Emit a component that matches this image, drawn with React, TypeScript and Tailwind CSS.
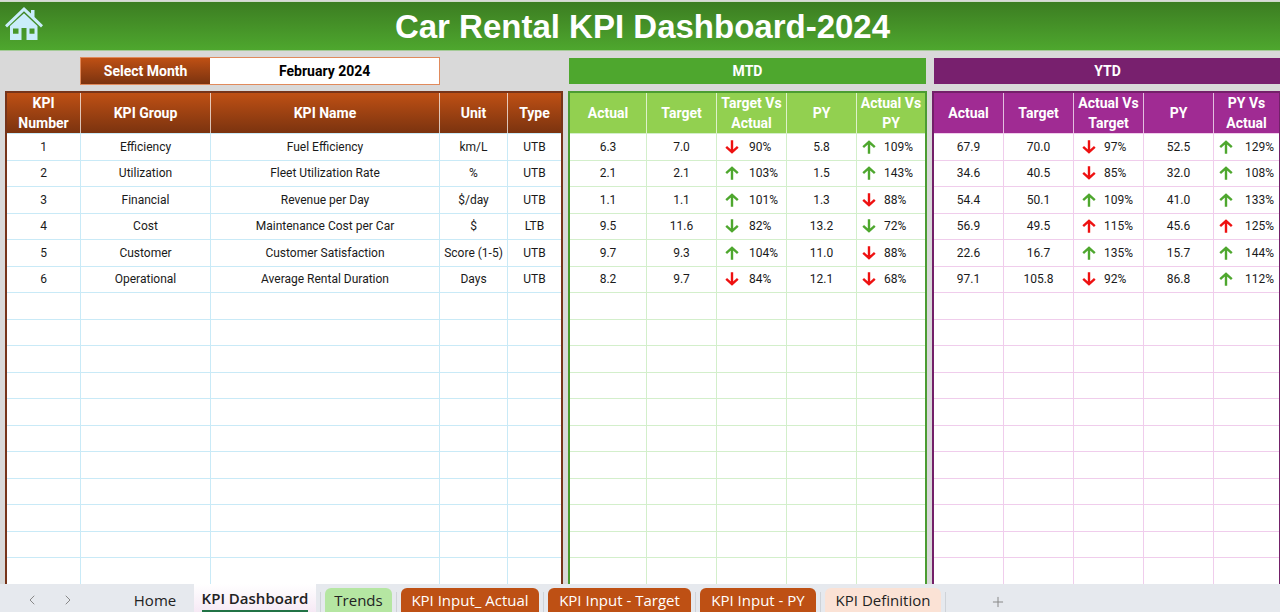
import { ChevronLeft, ChevronRight, Plus } from "lucide-react";
import clsx from "clsx";

type Trend = { dir: "up" | "down"; good: boolean; value: string };
type Cell = string | Trend;
type Column = { label: string; width: string; cell?: string };

const up = (value: string, good = true): Trend => ({ dir: "up", good, value });
const down = (value: string, good = false): Trend => ({ dir: "down", good, value });

const ROW_COUNT = 17;

const months = [
    "January 2024",
    "February 2024",
    "March 2024",
    "April 2024",
    "May 2024",
    "June 2024",
];

const kpiColumns: Column[] = [
    { label: "KPI Number", width: "w-[74px]" },
    { label: "KPI Group", width: "w-[130px]" },
    { label: "KPI Name", width: "w-[229px]" },
    { label: "Unit", width: "w-[68px]" },
    { label: "Type", width: "w-[53px]" },
];

const kpiRows: Cell[][] = [
    ["1", "Efficiency", "Fuel Efficiency", "km/L", "UTB"],
    ["2", "Utilization", "Fleet Utilization Rate", "%", "UTB"],
    ["3", "Financial", "Revenue per Day", "$/day", "UTB"],
    ["4", "Cost", "Maintenance Cost per Car", "$", "LTB"],
    ["5", "Customer", "Customer Satisfaction", "Score (1-5)", "UTB"],
    ["6", "Operational", "Average Rental Duration", "Days", "UTB"],
];

const mtdColumns: Column[] = [
    { label: "Actual", width: "w-[77px]" },
    { label: "Target", width: "w-[70px]" },
    { label: "Target Vs Actual", width: "w-[70px]", cell: "pl-2 gap-[10px]" },
    { label: "PY", width: "w-[70px]" },
    { label: "Actual Vs PY", width: "w-[68px]", cell: "pl-[5px] gap-2" },
];

const mtdRows: Cell[][] = [
    ["6.3", "7.0", down("90%"), "5.8", up("109%")],
    ["2.1", "2.1", up("103%"), "1.5", up("143%")],
    ["1.1", "1.1", up("101%"), "1.3", down("88%")],
    ["9.5", "11.6", down("82%", true), "13.2", down("72%", true)],
    ["9.7", "9.3", up("104%"), "11.0", down("88%")],
    ["8.2", "9.7", down("84%"), "12.1", down("68%")],
];

const ytdColumns: Column[] = [
    { label: "Actual", width: "w-[70px]" },
    { label: "Target", width: "w-[70px]" },
    { label: "Actual Vs Target", width: "w-[70px]", cell: "pl-2 gap-2" },
    { label: "PY", width: "w-[70px]" },
    { label: "PY Vs Actual", width: "w-[65px]", cell: "pl-[5px] gap-3" },
];

const ytdRows: Cell[][] = [
    ["67.9", "70.0", down("97%"), "52.5", up("129%")],
    ["34.6", "40.5", down("85%"), "32.0", up("108%")],
    ["54.4", "50.1", up("109%"), "41.0", up("133%")],
    ["56.9", "49.5", up("115%", false), "45.6", up("125%", false)],
    ["22.6", "16.7", up("135%"), "15.7", up("144%")],
    ["97.1", "105.8", down("92%"), "86.8", up("112%")],
];

const themes = {
    brown: {
        frame: "border-[#76341a]",
        head: "bg-linear-to-b from-[#bf5014] to-[#7b330f]",
        line: "border-[#c9eaf7]",
    },
    green: {
        frame: "border-[#4b9c32]",
        head: "bg-[#92d050]",
        line: "border-[#d3efcb]",
    },
    purple: {
        frame: "border-[#732069]",
        head: "bg-[#a02b93]",
        line: "border-[#f0cdec]",
    },
};

function HomeIcon() {
    return (
        <svg viewBox="0 0 38 34" className="w-[38px] h-[34px]" fill="#caedfb">
            <path d="M19 0 L26 6.6 V3 H29.5 V10 L38 18.3 L36 20.5 L19 4.3 L2 20.5 L0 18.3 Z" />
            <path
                fillRule="evenodd"
                d="M19 6.3 L32.5 19 V33 H21.5 V21 H16.5 V33 H5 V19 Z M8 21.5 V26.8 H13.5 V21.5 Z M24.5 21.5 V26.8 H29.5 V21.5 Z"
            />
        </svg>
    );
}

function Arrow({ dir, good }: { dir: "up" | "down"; good: boolean }) {
    return (
        <svg
            viewBox="0 0 14 14"
            className={clsx("size-[14px] shrink-0", good ? "text-[#4ea72e]" : "text-[#ee1111]", dir === "down" && "rotate-180")}
            fill="none"
            stroke="currentColor"
            strokeWidth="2.4"
        >
            <path d="M7 13.8 V1.5 M1.2 7.2 L7 1.8 L12.8 7.2" />
        </svg>
    );
}

function KpiTable({ label, columns, rows, theme }: { label: string; columns: Column[]; rows: Cell[][]; theme: keyof typeof themes }) {
    const t = themes[theme];
    return (
        <div className={clsx("border-2 border-b-0 bg-white min-h-0", t.frame)}>
            <table aria-label={label} className="table-fixed w-full h-full border-separate border-spacing-0">
                <colgroup>
                    {columns.map((c) => (
                        <col key={c.label} className={c.width} />
                    ))}
                </colgroup>
                <thead className={t.head}>
                    <tr className="h-10">
                        {columns.map((c) => (
                            <th
                                key={c.label}
                                scope="col"
                                className="p-0 px-0.5 text-sm leading-5 font-bold text-white border-r border-white/70 last:border-r-0"
                            >
                                {c.label}
                            </th>
                        ))}
                    </tr>
                </thead>
                <tbody>
                    {Array.from({ length: ROW_COUNT }, (_, r) => (
                        <tr key={r} className="h-[26px]">
                            {columns.map((c, i) => {
                                const cell = rows[r]?.[i];
                                return (
                                    <td
                                        key={c.label}
                                        className={clsx("p-0 text-center text-xs whitespace-nowrap border-t border-r last:border-r-0", t.line)}
                                    >
                                        {typeof cell === "object" ? (
                                            <span className={clsx("flex items-center", c.cell)}>
                                                <Arrow dir={cell.dir} good={cell.good} />
                                                {cell.value}
                                            </span>
                                        ) : (
                                            cell
                                        )}
                                    </td>
                                );
                            })}
                        </tr>
                    ))}
                </tbody>
            </table>
        </div>
    );
}

function Separator() {
    return <span className="w-px h-5 mx-1 bg-[#cfd3d8] shrink-0" />;
}

function SheetTabs() {
    const tab = "h-6 pt-0.5 pb-0.5 rounded-t-md shrink-0 whitespace-nowrap";
    return (
        <nav className="flex items-end h-7 shrink-0 overflow-hidden bg-[#e6e9ee] font-['Open_Sans',sans-serif] text-[15px] leading-5 text-[#222]">
            <button aria-label="Previous sheet" className="h-6 ml-6 mr-5 text-[#888]">
                <ChevronLeft size={16} strokeWidth={1.5} />
            </button>
            <button aria-label="Next sheet" className="h-6 text-[#888]">
                <ChevronRight size={16} strokeWidth={1.5} />
            </button>
            <button className={clsx(tab, "w-[70px] ml-11")}>Home</button>
            <button className="h-7 w-[122px] px-2 ml-1 shrink-0 whitespace-nowrap bg-linear-to-b from-white to-[#f6e9f5] font-semibold">
                <span className="flex justify-center h-7 pt-1 border-b-2 border-[#217346]">KPI Dashboard</span>
            </button>
            <Separator />
            <button className={clsx(tab, "w-[67px] bg-[#b5e6a2]")}>Trends</button>
            <Separator />
            <button className={clsx(tab, "w-[138px] bg-[#be5014] text-white")}>KPI Input_ Actual</button>
            <Separator />
            <button className={clsx(tab, "w-[143px] bg-[#be5014] text-white")}>KPI Input - Target</button>
            <Separator />
            <button className={clsx(tab, "w-[116px] bg-[#be5014] text-white")}>KPI Input - PY</button>
            <Separator />
            <button className={clsx(tab, "w-[116px] bg-[#fbe2d5]")}>KPI Definition</button>
            <Separator />
            <button aria-label="New sheet" className="h-5 ml-10 text-[#888]">
                <Plus size={16} strokeWidth={1.5} />
            </button>
        </nav>
    );
}

export default function App() {
    return (
        <div className="flex flex-col h-screen min-h-[560px] overflow-hidden bg-[#d9d9d9] font-[Roboto,sans-serif] text-[#1a1a1a]">
            <header className="grid grid-cols-[1fr_auto_1fr] items-start h-[50px] pt-[5px] mt-[1px] pl-[5px] shrink-0 border-t border-b border-t-[#d0dccb] border-b-[#a5cb98] bg-linear-to-b from-[#3c7d22] to-[#4ea72e]">
                <a href="#home" aria-label="Home" className="justify-self-start">
                    <HomeIcon />
                </a>
                <h1 className="font-['Liberation_Sans',sans-serif] text-[33px] leading-10 font-bold text-white">
                    Car Rental KPI Dashboard-2024
                </h1>
            </header>

            <main className="grid grid-cols-[558fr_359fr_348fr] grid-rows-[28px_1fr] gap-x-[5px] gap-y-[6px] flex-1 min-h-0 pl-[5px] pt-[6px]">
                <div className="grid grid-cols-[75fr_360fr_123fr]">
                    <div className="col-start-2 grid grid-cols-[130fr_230fr] border border-[#e08a5c] text-sm font-bold">
                        <label
                            htmlFor="month"
                            className="flex items-center justify-center text-white bg-linear-to-b from-[#bf5014] to-[#7b330f]"
                        >
                            Select Month
                        </label>
                        <select
                            id="month"
                            defaultValue="February 2024"
                            className="appearance-none bg-white text-black text-center [text-align-last:center]"
                        >
                            {months.map((m) => (
                                <option key={m}>{m}</option>
                            ))}
                        </select>
                    </div>
                </div>
                <h2 className="flex items-center justify-center mx-px my-px text-sm font-bold text-white bg-[#4ea72e]">MTD</h2>
                <h2 className="flex items-center justify-center ml-0.5 my-px text-sm font-bold text-white bg-[#78206e]">YTD</h2>

                <KpiTable label="KPI list" columns={kpiColumns} rows={kpiRows} theme="brown" />
                <KpiTable label="MTD" columns={mtdColumns} rows={mtdRows} theme="green" />
                <KpiTable label="YTD" columns={ytdColumns} rows={ytdRows} theme="purple" />
            </main>

            <SheetTabs />
        </div>
    );
}
